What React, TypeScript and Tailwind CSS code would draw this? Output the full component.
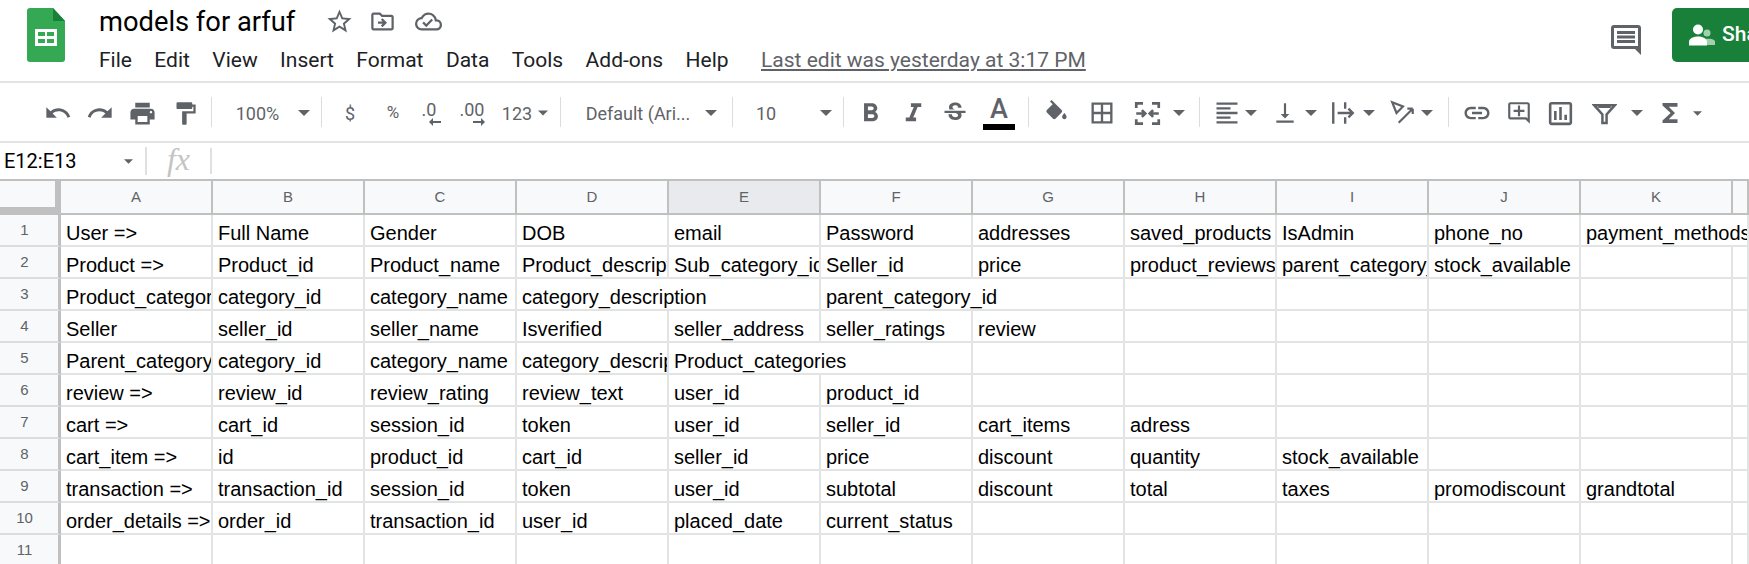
import type { ReactNode } from "react"
import {
    MdUndo, MdRedo, MdPrint, MdFormatPaint, MdFormatBold, MdFormatItalic, MdStrikethroughS,
    MdBorderAll, MdFormatAlignLeft, MdVerticalAlignBottom, MdLink,
    MdOutlineAddComment, MdOutlineInsertChart, MdFunctions, MdStarBorder,
    MdOutlineDriveFileMove, MdOutlineCloudDone,
} from "react-icons/md"

const roboto = "font-['Roboto',sans-serif]"
const arial = "font-['Liberation_Sans',Arial,sans-serif]"

type Cell = { text?: string; span?: number }

const columns = ["A", "B", "C", "D", "E", "F", "G", "H", "I", "J", "K", ""]

const rows: Cell[][] = [
    [{ text: "User =>" }, { text: "Full Name" }, { text: "Gender" }, { text: "DOB" }, { text: "email" }, { text: "Password" }, { text: "addresses" }, { text: "saved_products" }, { text: "IsAdmin" }, { text: "phone_no" }, { text: "payment_methods", span: 2 }],
    [{ text: "Product =>" }, { text: "Product_id" }, { text: "Product_name" }, { text: "Product_description" }, { text: "Sub_category_id" }, { text: "Seller_id" }, { text: "price" }, { text: "product_reviews" }, { text: "parent_category_id" }, { text: "stock_available" }, {}, {}],
    [{ text: "Product_category =>" }, { text: "category_id" }, { text: "category_name" }, { text: "category_description", span: 2 }, { text: "parent_category_id", span: 2 }, {}, {}, {}, {}, {}],
    [{ text: "Seller" }, { text: "seller_id" }, { text: "seller_name" }, { text: "Isverified" }, { text: "seller_address" }, { text: "seller_ratings" }, { text: "review" }, {}, {}, {}, {}, {}],
    [{ text: "Parent_category =>" }, { text: "category_id" }, { text: "category_name" }, { text: "category_description" }, { text: "Product_categories", span: 2 }, {}, {}, {}, {}, {}, {}],
    [{ text: "review =>" }, { text: "review_id" }, { text: "review_rating" }, { text: "review_text" }, { text: "user_id" }, { text: "product_id" }, {}, {}, {}, {}, {}, {}],
    [{ text: "cart =>" }, { text: "cart_id" }, { text: "session_id" }, { text: "token" }, { text: "user_id" }, { text: "seller_id" }, { text: "cart_items" }, { text: "adress" }, {}, {}, {}, {}],
    [{ text: "cart_item =>" }, { text: "id" }, { text: "product_id" }, { text: "cart_id" }, { text: "seller_id" }, { text: "price" }, { text: "discount" }, { text: "quantity" }, { text: "stock_available" }, {}, {}, {}],
    [{ text: "transaction =>" }, { text: "transaction_id" }, { text: "session_id" }, { text: "token" }, { text: "user_id" }, { text: "subtotal" }, { text: "discount" }, { text: "total" }, { text: "taxes" }, { text: "promodiscount" }, { text: "grandtotal" }, {}],
    [{ text: "order_details =>" }, { text: "order_id" }, { text: "transaction_id" }, { text: "user_id" }, { text: "placed_date" }, { text: "current_status" }, {}, {}, {}, {}, {}, {}],
    [{}, {}, {}, {}, {}, {}, {}, {}, {}, {}, {}, {}],
]

const Caret = ({ small }: { small?: boolean }) => (
    <svg viewBox="0 0 12 6" className={small ? "w-[9px] h-[5px]" : "w-[12px] h-[6px]"}>
        <path d="M0 0h12L6 6z" fill="#5f6368" />
    </svg>
)

const Divider = () => <div className="w-[1px] h-[30px] bg-[#dadce0] shrink-0" />

const Gap = ({ w }: { w: string }) => <div className={`${w} shrink-0`} />

const Item = ({ w, children }: { w: string; children: ReactNode }) => (
    <div className={`${w} h-[30px] pt-[2px] shrink-0 flex items-center justify-center text-[#5f6368]`}>{children}</div>
)

const DecimalIcon = ({ label, right }: { label: string; right?: boolean }) => (
    <div className="flex flex-col items-center">
        <span className="text-[18px] leading-[20px]">{label}</span>
        <svg viewBox="0 0 12 8" className={`w-[12px] h-[8px] -mt-[2px] ${right ? "ml-[14px]" : "ml-[12px]"}`}>
            {right
                ? <path d="M0 3h8V0l4 4-4 4V5H0z" fill="#5f6368" />
                : <path d="M12 3H4V0L0 4l4 4V5h8z" fill="#5f6368" />}
        </svg>
    </div>
)

const Toolbar = () => (
    <div className={`h-[60px] flex items-center pl-[37px] border-b-2 border-[#e3e3e3] ${roboto}`}>
        <Item w="w-[42px]"><MdUndo size={28} /></Item>
        <Item w="w-[42px]"><MdRedo size={28} /></Item>
        <Item w="w-[42px]"><MdPrint size={29} /></Item>
        <Item w="w-[44px]"><MdFormatPaint size={27} /></Item>
        <Gap w="w-[4px]" />
        <Divider />
        <Item w="w-[71px]"><span className="text-[18px] pl-[20px]">100%</span></Item>
        <Item w="w-[38px]"><div className="pl-[4px]"><Caret /></div></Item>
        <Divider />
        <Item w="w-[54px]"><span className="text-[18px] pl-[2px]">$</span></Item>
        <Item w="w-[34px]"><span className="text-[17px]">%</span></Item>
        <Item w="w-[38px]"><DecimalIcon label=".0" /></Item>
        <Item w="w-[48px]"><DecimalIcon label=".00" right /></Item>
        <Item w="w-[42px]"><span className="text-[18px]">123</span></Item>
        <Item w="w-[10px]"><Caret /></Item>
        <Gap w="w-[12px]" />
        <Divider />
        <Item w="w-[143px]"><span className="text-[18px] pl-[11px] whitespace-nowrap">Default (Ari...</span></Item>
        <Item w="w-[14px]"><Caret /></Item>
        <Gap w="w-[14px]" />
        <Divider />
        <Item w="w-[66px]"><span className="text-[18px]">10</span></Item>
        <Item w="w-[44px]"><div className="pl-[10px]"><Caret /></div></Item>
        <Divider />
        <Item w="w-[53px]"><MdFormatBold size={31} /></Item>
        <Item w="w-[32px]"><MdFormatItalic size={31} /></Item>
        <Item w="w-[52px]"><MdStrikethroughS size={28} /></Item>
        <Item w="w-[36px]">
            <div className="flex flex-col items-center">
                <span className="text-[27px] leading-[24px] font-medium">A</span>
                <div className="w-[32px] h-[6px] bg-black mt-[3px]" />
            </div>
        </Item>
        <Gap w="w-[11px]" />
        <Divider />
        <Item w="w-[54px]">
            <svg viewBox="0 0 24 24" className="w-[27px] h-[27px]">
                <path d="M16.56 8.940 7.620 0 6.210 1.410l2.380 2.380-5.150 5.150c-.59.59-.59 1.540 0 2.120l5.500 5.500c.29.29.68.44 1.060.44s.77-.15 1.060-.44l5.500-5.500c.59-.58.59-1.530 0-2.120zM19 11.500s-2 2.170-2 3.500c0 1.100.9 2 2 2s2-.9 2-2c0-1.330-2-3.500-2-3.500z" fill="#5f6368" />
            </svg>
        </Item>
        <Item w="w-[38px]"><MdBorderAll size={28} /></Item>
        <Item w="w-[52px]">
            <svg viewBox="0 0 24 24" className="w-[27px] h-[27px]" fill="none" stroke="#5f6368" strokeWidth="2.4">
                <path d="M2 7V3h6M16 3h6v4M2 17v4h6M16 21h6v-4M2 12h7M22 12h-7M7 9l3 3-3 3M17 9l-3 3 3 3" />
            </svg>
        </Item>
        <Item w="w-[12px]"><Caret /></Item>
        <Gap w="w-[14px]" />
        <Divider />
        <Gap w="w-[10px]" />
        <Item w="w-[34px]"><MdFormatAlignLeft size={28} /></Item>
        <Gap w="w-[1px]" />
        <Item w="w-[12px]"><Caret /></Item>
        <Gap w="w-[14px]" />
        <Item w="w-[28px]"><MdVerticalAlignBottom size={26} /></Item>
        <Gap w="w-[6px]" />
        <Item w="w-[12px]"><Caret /></Item>
        <Gap w="w-[12px]" />
        <Item w="w-[28px]">
            <svg viewBox="0 0 24 24" className="w-[26px] h-[26px]" fill="none" stroke="#5f6368" strokeWidth="2.2">
                <path d="M3 2v20M14 2v6M14 16v6M7 12h14M17 8l4 4-4 4" />
            </svg>
        </Item>
        <Gap w="w-[6px]" />
        <Item w="w-[12px]"><Caret /></Item>
        <Gap w="w-[13px]" />
        <Item w="w-[30px]">
            <svg viewBox="0 0 24 24" className="w-[26px] h-[26px]" fill="none" stroke="#5f6368" strokeWidth="2">
                <path d="M2 2l10 4-6 6zM8 21L21 8M21 8h-5M21 8v5" />
            </svg>
        </Item>
        <Gap w="w-[3px]" />
        <Item w="w-[12px]"><Caret /></Item>
        <Gap w="w-[15px]" />
        <Divider />
        <Gap w="w-[1px]" />
        <Item w="w-[54px]"><MdLink size={30} /></Item>
        <Item w="w-[30px]"><MdOutlineAddComment size={26} /></Item>
        <Item w="w-[52px]"><MdOutlineInsertChart size={31} /></Item>
        <Item w="w-[36px]">
            <svg viewBox="0 0 24 24" className="w-[25px] h-[25px]" fill="none" stroke="#5f6368" strokeWidth="2.4">
                <path d="M2 4h20l-8 9v8h-4v-8zM6 5.500h12" />
            </svg>
        </Item>
        <Gap w="w-[9px]" />
        <Item w="w-[12px]"><Caret /></Item>
        <Gap w="w-[12px]" />
        <Item w="w-[30px]"><MdFunctions size={30} /></Item>
        <Gap w="w-[6px]" />
        <Item w="w-[12px]"><Caret small /></Item>
    </div>
)

const SheetLogo = () => (
    <svg viewBox="0 0 38 54" className="w-[38px] h-[54px] shrink-0">
        <path d="M3 0h23l12 13v38a3 3 0 0 1-3 3H3a3 3 0 0 1-3-3V3a3 3 0 0 1 3-3z" fill="#34a853" />
        <path d="M26 0l12 13H26z" fill="#188038" />
        <path d="M8 21h22v17H8z" fill="#fff" />
        <path d="M11 24h7v4h-7zM20 24h7v4h-7zM11 31h7v4h-7zM20 31h7v4h-7z" fill="#34a853" />
    </svg>
)

const ShareIcon = () => (
    <svg viewBox="0 0 26 22" className="w-[26px] h-[22px] shrink-0">
        <circle cx="18" cy="9" r="3.500" fill="#a3cfb0" />
        <path d="M14 16c2-1.500 10-2 12 1v4H14z" fill="#a3cfb0" />
        <circle cx="9" cy="5.500" r="5" fill="#fff" />
        <path d="M0 18c0-4 5-5.500 9-5.500s9 1.500 9 5.500v3.500H0z" fill="#fff" />
    </svg>
)

const menuItems = ["File", "Edit", "View", "Insert", "Format", "Data", "Tools", "Add-ons", "Help"]

const Header = () => (
    <div className={`h-[83px] flex items-start border-b-2 border-[#e3e3e3] overflow-hidden ${roboto}`}>
        <div className="pl-[27px] pt-[8px]"><SheetLogo /></div>
        <div className="ml-[34px] flex flex-col">
            <div className="h-[44px] flex items-center pb-[1px] text-[#5f6368]">
                <span className="text-[27.3px] leading-[30px] text-black w-[222px] whitespace-nowrap">models for arfuf</span>
                <MdStarBorder size={29} className="ml-[4px]" />
                <MdOutlineDriveFileMove size={27} className="ml-[15px]" />
                <MdOutlineCloudDone size={27} className="ml-[19px]" />
            </div>
            <div className="h-[32px] pt-[2px] flex items-center gap-[22.4px] text-[21px] text-[#202124]">
                {menuItems.map((m) => <span key={m}>{m}</span>)}
                <span className="ml-[10px] text-[#5f6368] underline underline-offset-2 whitespace-nowrap">Last edit was yesterday at 3:17 PM</span>
            </div>
        </div>
        <div className="ml-auto flex items-center">
            <svg viewBox="0 0 30 30" className="w-[30px] h-[30px] mt-[18px] mr-[31px]">
                <path d="M3 0h24a3 3 0 0 1 3 3v27l-6-6H3a3 3 0 0 1-3-3V3a3 3 0 0 1 3-3zM3 3v18h24V3zM6 6h18v3H6zM6 10.500h18v3H6zM6 15h18v3H6z" fill="#5f6368" fillRule="evenodd" />
            </svg>
            <div className="w-[77px] h-[54px] mt-[8px] bg-[#188038] rounded-l-[5px] flex items-center pl-[17px] gap-[7px] text-white text-[21px] font-medium overflow-hidden">
                <ShareIcon />
                <span>Share</span>
            </div>
        </div>
    </div>
)

const FormulaBar = () => (
    <div className="h-[36px] flex items-center">
        <div className={`w-[145px] pl-[4px] pr-[12px] flex items-center justify-between text-[20px] text-black ${roboto}`}>
            <span>E12:E13</span>
            <Caret small />
        </div>
        <div className="w-[2px] h-[28px] bg-[#e0e0e0]" />
        <div className="w-[63px] pb-[4px] flex justify-center text-[#c4c4c4] text-[32px] leading-[32px] italic font-['Liberation_Serif',serif]">fx</div>
        <div className="w-[2px] h-[26px] bg-[#e0e0e0]" />
    </div>
)

const Grid = () => (
    <div className={`grid grid-cols-[61px_repeat(11,152px)_16px] grid-rows-[36px_repeat(11,32px)] ${arial}`}>
        <div className="bg-[#f8f9fa] border-y-2 border-[#c0c0c0] relative">
            <div className="absolute right-0 top-0 bottom-0 w-[6px] bg-[#c0c0c0]" />
            <div className="absolute left-0 right-0 bottom-0 h-[6px] bg-[#c0c0c0]" />
        </div>
        {columns.map((c) => (
            <div
                key={c || "L"}
                className={`border-y-2 border-r-2 border-[#c0c0c0] flex items-center justify-center text-[15px] text-[#5f6368] ${c === "E" ? "bg-[#e8eaed]" : "bg-[#f8f9fa]"}`}
            >
                {c}
            </div>
        ))}
        {rows.map((row, i) => (
            <div key={i} className="contents">
                <div className="bg-[#f8f9fa] border-b-2 border-r-[3px] border-b-[#dcdcdc] border-r-[#c0c0c0] flex items-center justify-center pr-[9px] text-[15px] text-[#5f6368]">
                    {i + 1}
                </div>
                {row.map((cell, j) => (
                    <div
                        key={j}
                        className={`border-b-2 border-r-2 border-[#e2e3e3] overflow-hidden whitespace-nowrap pl-[5px] pt-[6px] text-[20px] leading-[24px] text-black ${cell.span === 2 ? "col-span-2" : ""}`}
                    >
                        {cell.text}
                    </div>
                ))}
            </div>
        ))}
    </div>
)

const App = () => {
    return (
        <div className="w-[1749px] h-[564px] overflow-hidden bg-white">
            <Header />
            <Toolbar />
            <FormulaBar />
            <Grid />
        </div>
    )
}

export default App
